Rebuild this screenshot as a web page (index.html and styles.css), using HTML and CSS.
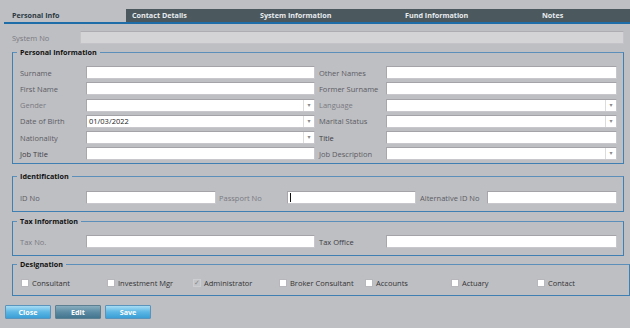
FILE: index.html
```html
<!DOCTYPE html>
<html lang="en">
<head>
  <meta charset="utf-8" />
  <title>Member Details</title>
  <link rel="stylesheet" href="styles.css">
</head>
<body>

  <!-- tabs -->
  <div class="tabs">
    <div class="tab active">Personal Info</div>
    <div class="tab tab-contact">Contact Details</div>
    <div class="tab tab-system">System Information</div>
    <div class="tab tab-fund">Fund Information</div>
    <div class="tab tab-notes">Notes</div>
  </div>

  <div class="system-row">
    <span class="lbl light">System No</span>
    <div class="box readonly"></div>
  </div>

  <!-- personal information -->
  <fieldset class="group">
    <legend>Personal Information</legend>
    <div class="grid-two">
      <span class="lbl">Surname</span>
      <div class="box"></div>
      <span class="lbl">Other Names</span>
      <div class="box"></div>

      <span class="lbl">First Name</span>
      <div class="box"></div>
      <span class="lbl">Former Surname</span>
      <div class="box"></div>

      <span class="lbl light">Gender</span>
      <div class="box combo"><span class="val"></span><span class="arrow">&#9662;</span></div>
      <span class="lbl light">Language</span>
      <div class="box combo"><span class="val"></span><span class="arrow">&#9662;</span></div>

      <span class="lbl">Date of Birth</span>
      <div class="box combo"><span class="val">01/03/2022</span><span class="arrow">&#9662;</span></div>
      <span class="lbl">Marital Status</span>
      <div class="box combo"><span class="val"></span><span class="arrow">&#9662;</span></div>

      <span class="lbl">Nationality</span>
      <div class="box combo"><span class="val"></span><span class="arrow">&#9662;</span></div>
      <span class="lbl dark">Title</span>
      <div class="box"></div>

      <span class="lbl dark">Job Title</span>
      <div class="box"></div>
      <span class="lbl">Job Description</span>
      <div class="box combo"><span class="val"></span><span class="arrow">&#9662;</span></div>
    </div>
  </fieldset>

  <!-- identification -->
  <fieldset class="group">
    <legend>Identification</legend>
    <div class="grid-three">
      <span class="lbl">ID No</span>
      <div class="box"></div>
      <span class="lbl light">Passport No</span>
      <div class="box"><span class="caret"></span></div>
      <span class="lbl">Alternative ID No</span>
      <div class="box"></div>
    </div>
  </fieldset>

  <!-- tax -->
  <fieldset class="group tax">
    <legend>Tax Information</legend>
    <div class="grid-two">
      <span class="lbl light">Tax No.</span>
      <div class="box"></div>
      <span class="lbl dark">Tax Office</span>
      <div class="box"></div>
    </div>
  </fieldset>

  <!-- designation -->
  <fieldset class="group designation">
    <legend>Designation</legend>
    <div class="checks">
      <label class="check"><span class="tick"></span>Consultant</label>
      <label class="check"><span class="tick"></span>Investment Mgr</label>
      <label class="check"><span class="tick on">&#10003;</span>Administrator</label>
      <label class="check"><span class="tick"></span>Broker Consultant</label>
      <label class="check"><span class="tick"></span>Accounts</label>
      <label class="check"><span class="tick"></span>Actuary</label>
      <label class="check"><span class="tick"></span>Contact</label>
    </div>
  </fieldset>

  <div class="buttons">
    <button class="btn">Close</button>
    <button class="btn btn-edit">Edit</button>
    <button class="btn">Save</button>
  </div>

</body>
</html>
```

FILE: styles.css
```css
body {
  margin: 0;
  background-color: #bebfc3;
  font-family: "Open Sans", "DejaVu Sans", sans-serif;
  font-size: 7.5px;
  color: #555;
}

/* tabs */
.tabs {
  display: flex;
  margin: 9px 0 0 4px;
  border-bottom: 2px solid #1e6ca8;
}

.tab {
  height: 13px;
  line-height: 13px;
  font-size: 7.2px;
  font-weight: bold;
  color: #e8ecee;
  background-color: #4b585e;
  box-sizing: border-box;
}

.tab.active {
  width: 122px;
  padding-left: 8px;
  color: #2c3a44;
  background-color: transparent;
}

.tab-contact {
  width: 128px;
  padding-left: 6px;
}

.tab-system {
  width: 145px;
  padding-left: 6px;
}

.tab-fund {
  width: 131px;
  padding-left: 6px;
}

.tab-notes {
  flex: 1;
  padding-left: 12px;
}

/* system no */
.system-row {
  display: grid;
  grid-template-columns: 68px 1fr;
  align-items: center;
  margin: 7px 6px 0 12px;
}

.lbl {
  white-space: nowrap;
  color: #5c5c64;
}

.lbl.light {
  color: #7a7a82;
}

.lbl.dark {
  color: #3c3c44;
}

.box {
  height: 13px;
  box-sizing: border-box;
  background-color: #fff;
  border: 1px solid #c8c8cc;
  border-top-color: #a4a4a8;
  border-left-color: #a8a8ac;
  position: relative;
}

.box.readonly {
  background-color: #d4d4d6;
  border-color: #c4c4c8;
  border-top-color: #aeaeb2;
}

.combo {
  display: flex;
}

.combo .val {
  flex: 1;
  line-height: 11px;
  padding-left: 2px;
  color: #222;
}

.combo .arrow {
  width: 10px;
  border-left: 1px solid #dcdcdc;
  color: #8a8a8a;
  font-size: 6px;
  line-height: 11px;
  text-align: center;
}

.caret {
  position: absolute;
  left: 2px;
  top: 1px;
  width: 1px;
  height: 9px;
  background-color: #111;
}

/* groups */
.group {
  margin: 3px 6px 0 12px;
  padding: 8px 6px 3px 7px;
  border: 1px solid #3f7fb2;
  border-color: #5c90bb #3f7fb2 #3f7fb2 #3f7fb2;
}

.group + .group {
  margin-top: 7px;
}

.group.tax {
  margin-top: 4px;
  padding-bottom: 7px;
}

.group.designation {
  margin-top: 3px;
}

.group legend {
  margin-left: -3px;
  padding: 0 3px;
  font-size: 7.2px;
  font-weight: bold;
  color: #111;
  line-height: 11px;
}

.grid-two {
  display: grid;
  grid-template-columns: 66px 233px 67px 1fr;
  row-gap: 3.3px;
  align-items: center;
}

.grid-two .box:nth-child(4n+2) {
  margin-right: 4px;
}

.grid-three {
  display: grid;
  grid-template-columns: 66px 133px 68px 133px 67px 1fr;
  align-items: center;
  padding: 1px 0 4px;
}

.grid-three .box:nth-child(2) {
  margin-right: 3px;
}

.grid-three .box:nth-child(4) {
  margin-right: 4px;
}

/* checkboxes */
.checks {
  display: flex;
  padding: 0 0 4px 1px;
}

.check {
  display: flex;
  align-items: center;
  width: 86px;
  color: #333;
}

.tick {
  width: 8px;
  height: 8px;
  margin-right: 3px;
  background-color: #fff;
  border: 1px solid #b8b8bc;
  box-sizing: border-box;
  font-size: 7px;
  line-height: 6px;
  text-align: center;
  color: #888;
}

.tick.on {
  background-color: #c4c5c9;
  border-color: #cdced2;
}

/* buttons */
.buttons {
  display: flex;
  gap: 4px;
  margin: 9px 0 0 5px;
}

.btn {
  width: 46px;
  height: 14px;
  padding: 0;
  font-family: "Open Sans", "DejaVu Sans", sans-serif;
  font-size: 7.2px;
  font-weight: bold;
  color: #fff;
  border: 1px solid #5a93bb;
  border-radius: 1px;
  background: linear-gradient(#a8dcf4, #5bb6e4 50%, #3a9fd6);
}

.btn-edit {
  border-color: #5d7f92;
  background: linear-gradient(#89aebf, #5b8ba3 50%, #44758f);
}
```
